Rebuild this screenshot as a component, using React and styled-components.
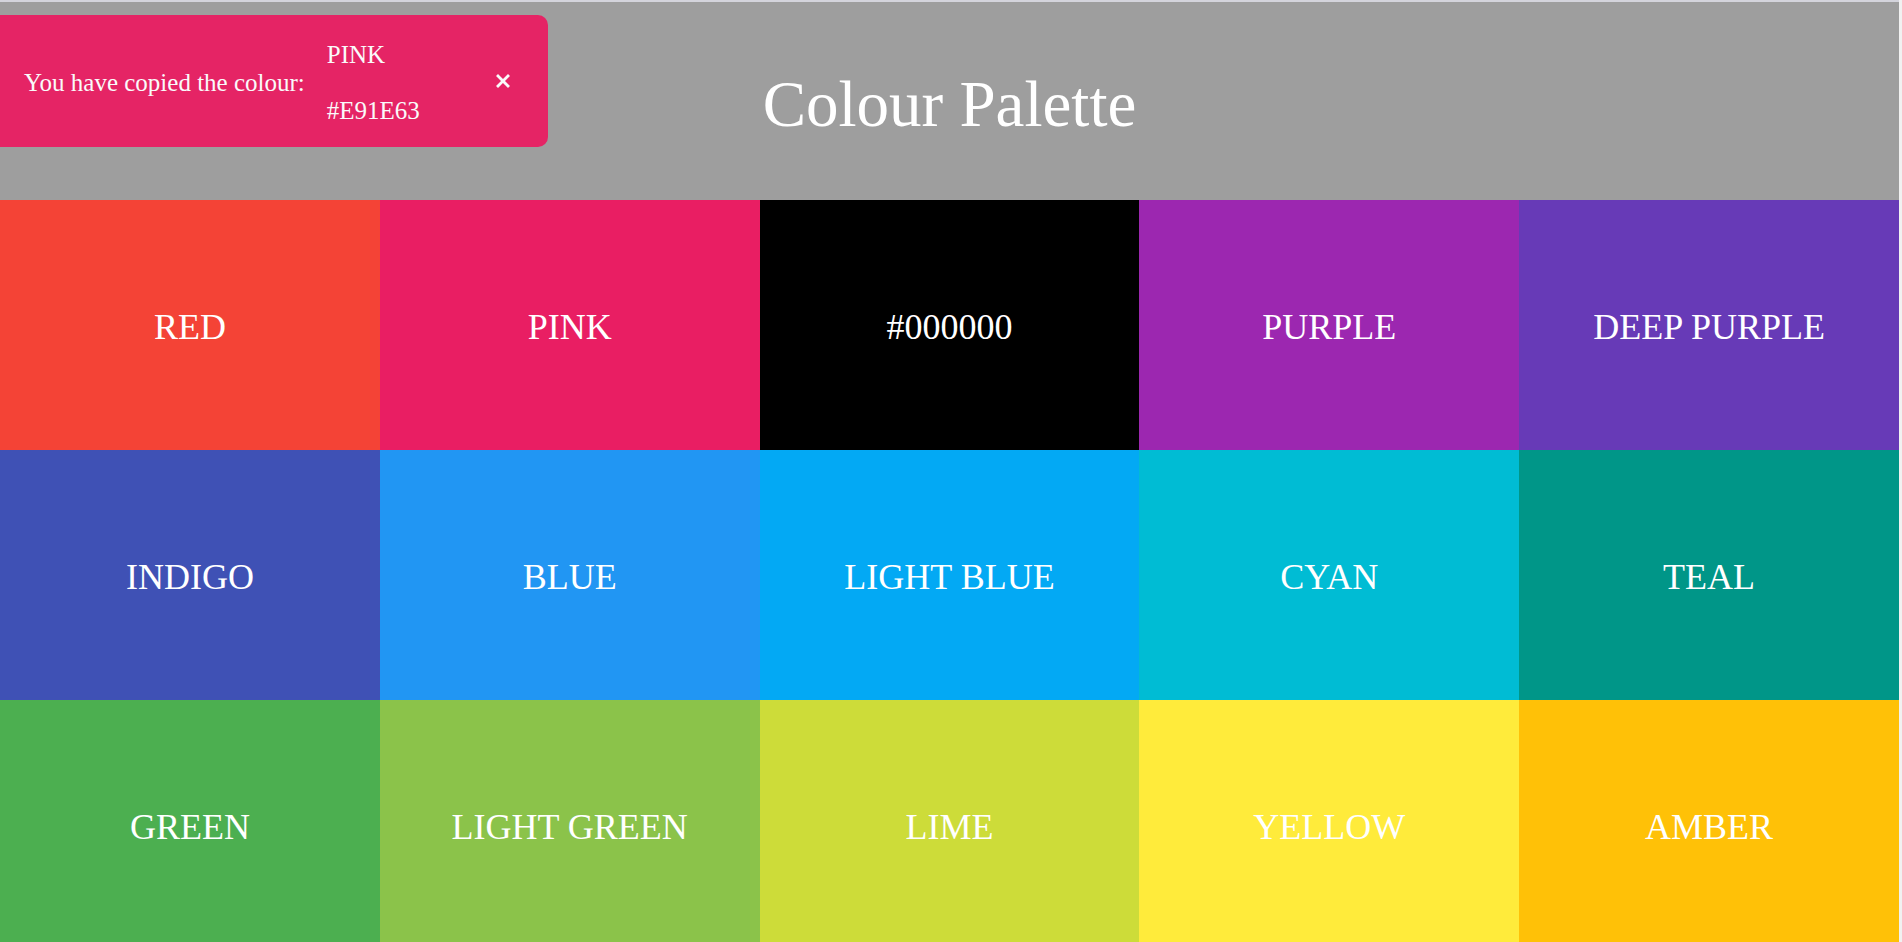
import React, { useState } from 'react'
import styled, { createGlobalStyle } from 'styled-components';

const colours = [
  { name: 'RED', hex: '#F44336' },
  { name: 'PINK', hex: '#E91E63' },
  { name: '#000000', hex: '#000000' },
  { name: 'PURPLE', hex: '#9C27B0' },
  { name: 'DEEP PURPLE', hex: '#673AB7' },
  { name: 'INDIGO', hex: '#3F51B5' },
  { name: 'BLUE', hex: '#2196F3' },
  { name: 'LIGHT BLUE', hex: '#03A9F4' },
  { name: 'CYAN', hex: '#00BCD4' },
  { name: 'TEAL', hex: '#009688' },
  { name: 'GREEN', hex: '#4CAF50' },
  { name: 'LIGHT GREEN', hex: '#8BC34A' },
  { name: 'LIME', hex: '#CDDC39' },
  { name: 'YELLOW', hex: '#FFEB3B' },
  { name: 'AMBER', hex: '#FFC107' },
];

function App() {
  const [copied, setCopied] = useState(colours[1]);
  return (
    <>
      <GlobalStyle />
      <Page>
        <Header>
          <Title>Colour Palette</Title>
        </Header>
        <Grid>
          {colours.map((c) => (
            <Swatch key={c.name} bg={c.hex} onClick={() => setCopied(c)}>
              {c.name}
            </Swatch>
          ))}
        </Grid>
      </Page>
      {copied && (
        <Toast bg={copied.hex}>
          <ToastText>You have copied the colour:</ToastText>
          <ToastInfo>
            <p>{copied.name}</p>
            <p>{copied.hex}</p>
          </ToastInfo>
          <Close onClick={() => setCopied(null)}>
            <svg width="14" height="14" viewBox="0 0 14 14">
              <path d="M2 2 L12 12 M12 2 L2 12" stroke="#fff" strokeWidth="2.8" strokeLinecap="square" />
            </svg>
          </Close>
        </Toast>
      )}
    </>
  )
}

const GlobalStyle = createGlobalStyle`
html, body {
  margin: 0;
  padding: 0;
}
body {
  font-family: "Liberation Serif", "Times New Roman", serif;
  background: #f1f1f1;
}
`
const Page = styled.div`
margin-right: 3px;
border-top: 2px solid #d4d4dc;
`
const Header = styled.header`
height: 198px;
box-sizing: border-box;
padding-top: 6px;
background-color: #9e9e9e;
display: flex;
align-items: center;
justify-content: center;
`
const Title = styled.h1`
margin: 0;
color: #fff;
font-weight: 400;
font-size: 65px;
`
const Grid = styled.div`
display: grid;
grid-template-columns: repeat(5, 1fr);
grid-auto-rows: 250px;
`
const Swatch = styled.div`
background-color: ${props => props.bg};
color: #fff;
font-size: 36px;
box-sizing: border-box;
padding-top: 4px;
display: flex;
align-items: center;
justify-content: center;
cursor: pointer;
`
const Toast = styled.div`
position: fixed;
top: 15px;
left: -10px;
width: 558px;
height: 132px;
box-sizing: border-box;
padding: 0 38px 0 34px;
border-radius: 10px;
background-color: ${props => props.bg};
opacity: 0.95;
color: #fff;
display: flex;
align-items: center;
font-size: 25px;
`
const ToastText = styled.span`
margin-right: 22px;
white-space: nowrap;
padding-top: 3px;
`
const ToastInfo = styled.div`
flex: 1;
display: flex;
flex-direction: column;
gap: 28px;
padding-top: 4px;
p{
  margin: 0;
  font-size: 25px;
  line-height: 28px;
}
`
const Close = styled.button`
border: none;
background: none;
padding: 0;
display: flex;
cursor: pointer;
`

export default App
